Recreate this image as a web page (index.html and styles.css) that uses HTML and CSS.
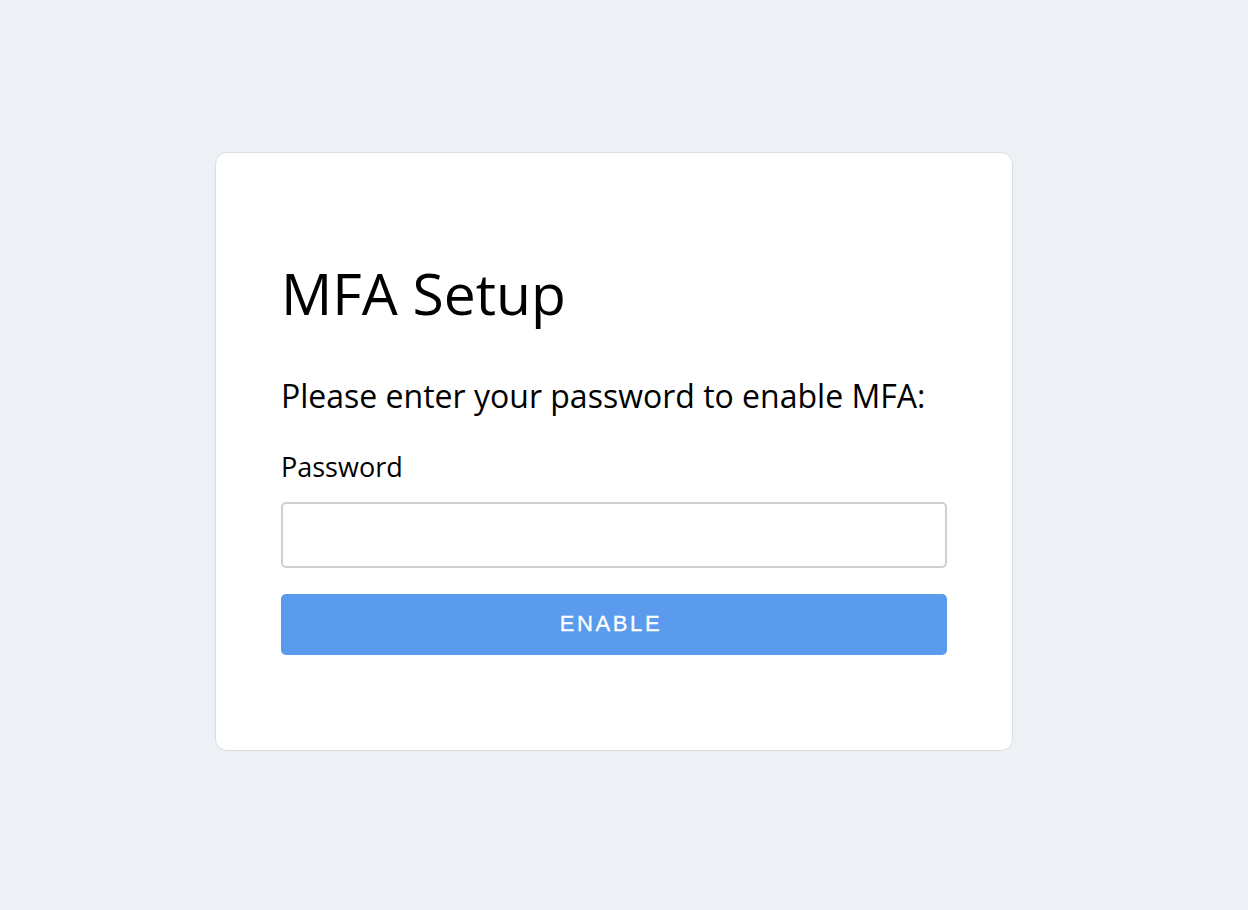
FILE: index.html
```html
<!DOCTYPE html>
<html lang="en">
<head>
  <meta charset="UTF-8">
  <meta name="viewport" content="width=device-width, initial-scale=1.0">
  <title>MFA Setup</title>
  <link rel="stylesheet" href="styles.css">
</head>
<body>
  <div class="card">
    <h1 class="card-title">MFA Setup</h1>
    <p class="card-text">Please enter your password to enable MFA:</p>
    <form id="mfaForm">
      <div class="form-group">
        <label for="password">Password</label>
        <input type="password" id="password" name="password">
      </div>
      <button type="submit">ENABLE</button>
    </form>
  </div>
</body>
</html>
```

FILE: styles.css
```css
body {
  font-family: "Open Sans", "Noto Sans", Arial, sans-serif;
  background-color: #edf1f5;
  color: #000;
  margin: 0;
  padding: 0 20px 7px 0;
  box-sizing: border-box;
  display: flex;
  justify-content: center;
  align-items: center;
  height: 100vh;
}

.card {
  background-color: #fff;
  border: 1px solid #dadee3;
  border-radius: 12px;
  box-sizing: border-box;
  width: 798px;
  padding: 106px 65px 95px;
}

.card-title {
  font-size: 57px;
  font-weight: 400;
  line-height: 1.2;
  margin: 0;
}

.card-text {
  font-size: 32px;
  line-height: 42px;
  margin: 47px 0 0;
}

.form-group {
  margin-top: 30px;
}

.form-group label {
  display: block;
  font-size: 27px;
  line-height: 39px;
  margin-bottom: 16px;
}

.form-group input {
  display: block;
  width: 100%;
  height: 66px;
  box-sizing: border-box;
  border: 2px solid #cfcfcf;
  border-radius: 5px;
  padding: 0 14px;
  font-family: inherit;
  font-size: 24px;
  outline: none;
}

button {
  display: block;
  width: 100%;
  height: 61px;
  margin-top: 26px;
  padding: 0 6px 0 0;
  background-color: #5b9bee;
  color: #fff;
  border: none;
  border-radius: 5px;
  font-family: "Liberation Sans", Arial, sans-serif;
  font-size: 22px;
  letter-spacing: 2.6px;
  -webkit-text-stroke: 0.3px #fff;
  cursor: pointer;
}

button:hover {
  background-color: #4a8de6;
}
```
